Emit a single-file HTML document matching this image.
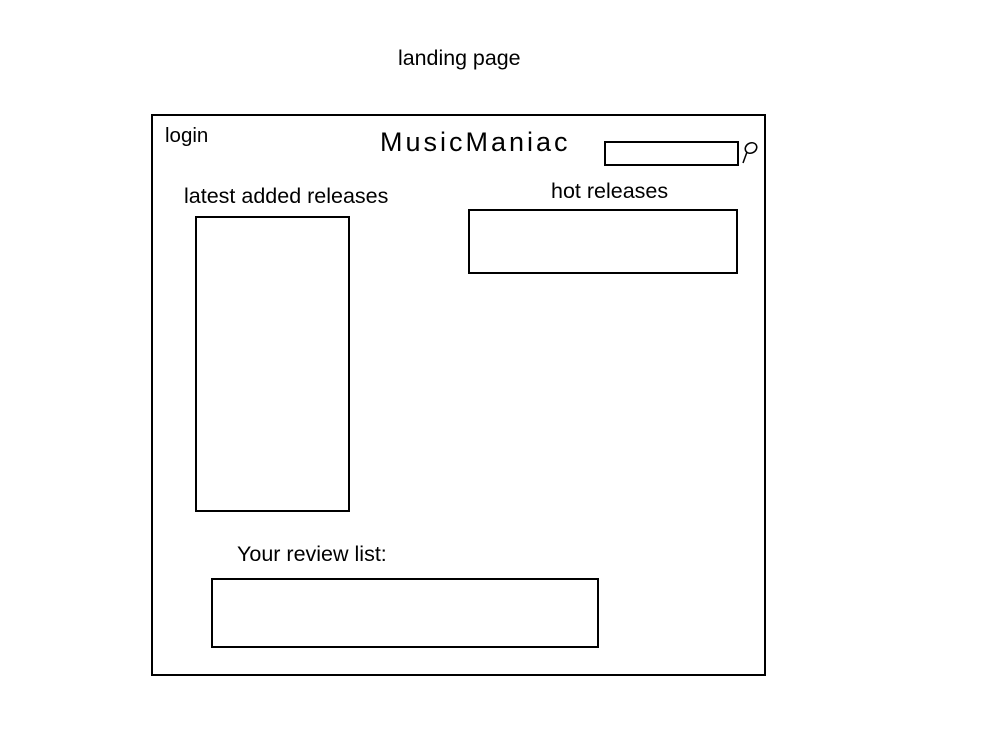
<!DOCTYPE html>
<html><head><style>
body{margin:0;width:1000px;height:750px;background:#fff;position:relative;font-family:"Liberation Sans",sans-serif;color:#000;overflow:hidden}
.t{position:absolute;white-space:nowrap;line-height:1}
.b{position:absolute;border:2px solid #000;box-sizing:border-box}
</style></head><body>
<div class="t" style="left:398px;top:48px;font-size:21.4px">landing page</div>
<div class="b" style="left:151px;top:114px;width:615px;height:562px"></div>
<div class="t" style="left:165px;top:126px;font-size:20.5px">login</div>
<div class="t" style="left:380px;top:129px;font-size:27px;letter-spacing:3px">MusicManiac</div>
<div class="b" style="left:604px;top:141px;width:135px;height:25px"></div>
<svg style="position:absolute;left:740px;top:140px" width="20" height="26"><ellipse cx="11" cy="8" rx="6" ry="5" fill="none" stroke="#000" stroke-width="1.5" transform="rotate(-30 11 8)"/><path d="M7 12 L3 23" stroke="#000" stroke-width="1.5"/></svg>
<div class="t" style="left:184px;top:186px;font-size:21.5px">latest added releases</div>
<div class="t" style="left:551px;top:181px;font-size:21.5px">hot releases</div>
<div class="b" style="left:195px;top:216px;width:155px;height:296px"></div>
<div class="b" style="left:468px;top:209px;width:270px;height:65px"></div>
<div class="t" style="left:237px;top:544px;font-size:21.5px">Your review list:</div>
<div class="b" style="left:211px;top:578px;width:388px;height:70px"></div>
</body></html>
